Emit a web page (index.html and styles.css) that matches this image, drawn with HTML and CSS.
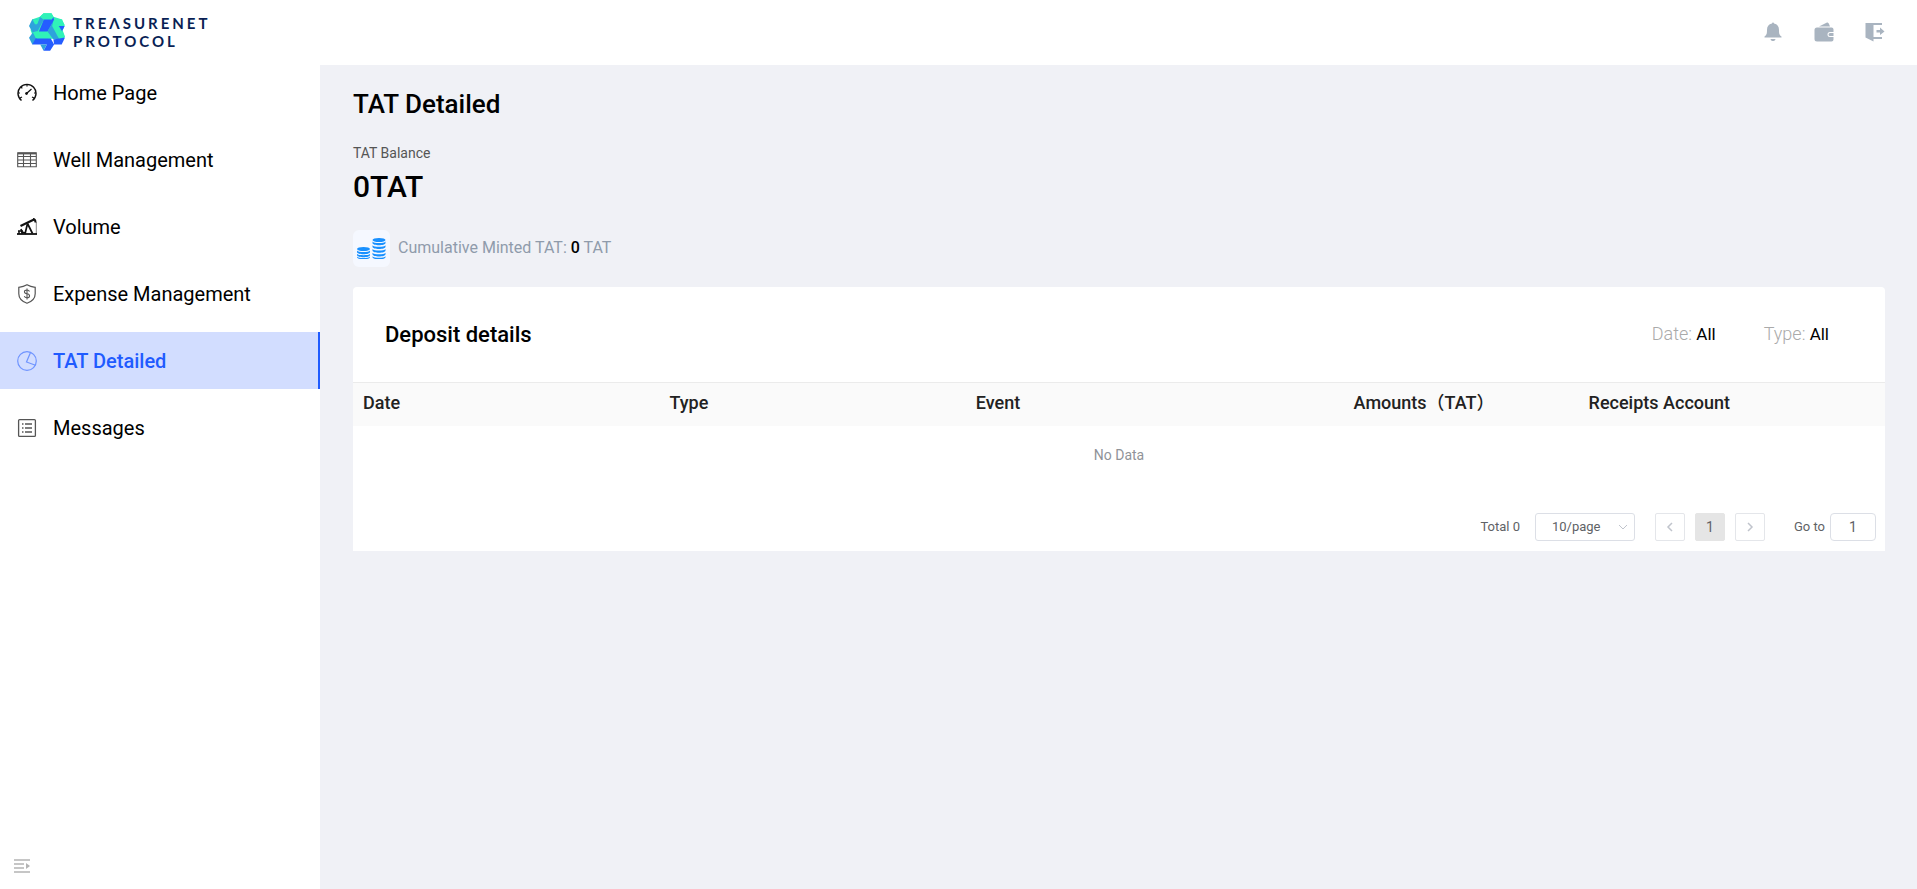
FILE: index.html
```html
<!DOCTYPE html>
<html lang="en">
  <head>
    <meta charset="utf-8" />
    <meta name="viewport" content="width=device-width, initial-scale=1" />
    <link rel="stylesheet" href="styles.css">
    <title>TAT Detailed</title>
  </head>
  <body>
    <header class="topbar">
      <a class="brand" href="#">
        <svg class="brand-mark" viewBox="0 0 109 113">
          <path fill="#30f2b8" d="M33 10L44 0h24l6 10 24 8 10 18-6 15 7 20-36 6-58 2-10-28 6-33z" />
          <path fill="#2ea3dc" d="M10 18L0 38l11 20 13-5 12-22-8-13z" />
          <path fill="#30f2b8" d="M10 18h23l-8 15H18z" />
          <path fill="#2ea3dc" d="M33 10l12 9-19 35H12l14-22z" />
          <path fill="#30f2b8" d="M33 10L44 0h24l6 10-5 9H45z" />
          <path fill="#255dff" d="M45 19h24l5-8 2 10-20 34H30z" />
          <path fill="#2ea3dc" d="M71 28l-15 27 18 24h26L72 30z" />
          <path fill="#30f2b8" d="M76 18h24l8 18-18 2 19 34-9 7h-8L70 38z" />
          <path fill="#255dff" d="M90 38h18l-8 16z" />
          <path fill="#2ea3dc" d="M12 57L0 74l10 20 12-8 2-9z" />
          <path fill="#30f2b8" d="M12 57h44l10 18H20z" />
          <path fill="#255dff" d="M20 76h46l10 18-12 19H44l10-19H10z" />
          <path fill="#255dff" d="M74 79l35-6-10 21H76z" />
          <path fill="#2ea3dc" d="M34 94h20l-10 19z" />
        </svg>
        <span class="brand-name">TREΛSURENET<br>PROTOCOL</span>
      </a>
      <div class="actions">
        <button class="icon-button" aria-label="Notifications">
          <svg viewBox="0 0 20 20">
            <path d="M9 1.500a1 1 0 0 1 2 0c3.500.7 5 3 5 6.500 0 4 .5 5 2.500 6.500v1h-17v-1C3.500 13 4 12 4 8c0-3.500 1.500-5.800 5-6.500zM7.500 17h5c-.4 1.500-1 2-2.500 2s-2.100-.5-2.500-2z" />
          </svg>
        </button>
        <button class="icon-button" aria-label="Wallet">
          <svg viewBox="0 0 20 20">
            <path d="M5 4.500L13 .5c1 0 1.500.5 2 1.500l1 2.500zM3 5.500h14.500a2 2 0 0 1 2 2V10h-3.500a2.500 2.500 0 0 0 0 5h3.500v2.500a2 2 0 0 1-2 2H3a2.500 2.500 0 0 1-2.500-2.500V8A2.500 2.500 0 0 1 3 5.500z" />
            <path d="M16 11h3.500v3H16a1.500 1.500 0 0 1 0-3z" />
          </svg>
        </button>
        <button class="icon-button" aria-label="Log out">
          <svg viewBox="0 0 20 20">
            <path d="M.5 1H17v2H8.500v12H17v2H8.500v2.500L.5 15.500z" />
            <path d="M11.500 8H15V5.500L19.500 9.500 15 13v-2.500h-3.500z" />
          </svg>
        </button>
      </div>
    </header>

    <div class="layout">
      <aside class="sidebar">
        <nav class="menu">
          <a class="menu-item" href="#">
            <svg class="menu-icon dark" viewBox="0 0 20 20">
              <path d="M4.500 17.500a9 9 0 1 1 11 0" stroke-width="1.400" />
              <path d="M10 1.500v2M4 4l1.300 1.300M1 10h2M17 10h2M3 15l2-1M17 15l-2-1M9.500 10.500l5-4.500" stroke-width="1.200" />
              <circle cx="9.500" cy="10.500" r="1" fill="currentColor" />
            </svg>
            Home Page
          </a>
          <a class="menu-item" href="#">
            <svg class="menu-icon" viewBox="0 0 20 20">
              <path d="M.7 2.800h18.600v14H.7zM.7 6.500h18.600M.7 10h18.600M.7 13.500h18.600M6.500 4v13M13.500 4v13" stroke-width="1.100" />
              <path d="M1 3.500h18" stroke-width="1.800" />
            </svg>
            Well Management
          </a>
          <a class="menu-item" href="#">
            <svg class="menu-icon dark" viewBox="0 0 20 20">
              <path d="M0 17h20" stroke-width="1.800" />
              <path d="M1 14h5M2 17v-2.500M5 17v-2" stroke-width="1.500" />
              <path d="M3.500 9L17 2.500" stroke-width="2.200" />
              <path d="M16 2c2 0 2.500 1.500 2.500 3.500" stroke-width="2" />
              <path d="M10.500 6.500L8 17M10.500 6.500l5 10M4 12l1 3 3 1" stroke-width="1.700" />
              <path d="M19.300 5v12" stroke-width=".5" />
            </svg>
            Volume
          </a>
          <a class="menu-item" href="#">
            <svg class="menu-icon" viewBox="0 0 20 20">
              <path d="M10 .8c2.500 1.500 5 2.200 8.200 2.500v6.500c0 5-4 8-8.200 9.500-4.200-1.500-8.200-4.500-8.200-9.500V3.300C5 3 7.500 2.300 10 .8z" stroke-width="1.200" />
              <path d="M12.500 7.500C12 6.300 11 6 10 6c-3.500 0-3.300 3.300 0 3.800 3.500.6 3.300 4 0 4-1.300 0-2.300-.5-2.700-1.700M10 4.500v11" stroke-width="1.100" />
            </svg>
            Expense Management
          </a>
          <a class="menu-item active" href="#">
            <svg class="menu-icon" viewBox="0 0 20 20">
              <circle cx="10" cy="10" r="9.300" stroke-width="1.200" />
              <path d="M13.500 1.500L9.500 11l9 3.300" stroke-width="1.200" />
            </svg>
            TAT Detailed
          </a>
          <a class="menu-item" href="#">
            <svg class="menu-icon" viewBox="0 0 20 20">
              <rect x="1.600" y="1.600" width="16.800" height="16.800" rx="1" stroke-width="1.300" />
              <path d="M8 6h7M8 10h7M8 14h7M5 6h1.500M5 10h1.500M5 14h1.500" stroke-width="1.300" />
            </svg>
            Messages
          </a>
        </nav>
        <button class="collapse" aria-label="Expand menu">
          <svg viewBox="0 0 16 16">
            <path d="M0 2h16M0 6h10M0 10h10M0 14h16" stroke="currentColor" stroke-width="1.500" />
            <path d="M12 5l4 3-4 3z" fill="currentColor" />
          </svg>
        </button>
      </aside>

      <main class="content">
        <h1 class="page-title">TAT Detailed</h1>
        <p class="balance-label">TAT Balance</p>
        <p class="balance">0TAT</p>
        <div class="minted">
          <span class="coins">
            <svg viewBox="0 0 29 21">
              <g fill="#1890ff">
                <ellipse cx="6.500" cy="11" rx="6.500" ry="2" />
                <path d="M0 12.500v1.500c0 3 13 3 13 0v-1.500c-1 2-12 2-13 0zM0 15.700v1.300c0 3 13 3 13 0v-1.300c-1 2-12 2-13 0zM0 18.500v.7c0 2.800 13 2.800 13 0v-.7c-1 2-12 2-13 0z" />
                <ellipse cx="22" cy="2" rx="6.500" ry="2" />
                <path d="M15.500 3.500V5c0 3 13 3 13 0V3.500c-1 2-12 2-13 0zM15.500 7.200v1.500c0 3 13 3 13 0V7.200c-1 2-12 2-13 0zM15.500 11v1.500c0 3 13 3 13 0V11c-1 2-12 2-13 0zM15.500 14.700v1.500c0 3 13 3 13 0v-1.500c-1 2-12 2-13 0zM15.500 18.200v1c0 2.800 13 2.800 13 0v-1c-1 2-12 2-13 0z" />
              </g>
            </svg>
          </span>
          <p>Cumulative Minted TAT: <strong>0</strong> TAT</p>
        </div>

        <section class="card">
          <div class="card-header">
            <h2>Deposit details</h2>
            <div class="filters">
              <button class="filter"><span>Date:</span> All</button>
              <button class="filter"><span>Type:</span> All</button>
            </div>
          </div>
          <table class="table">
            <thead>
              <tr>
                <th class="col-date">Date</th>
                <th class="col-type">Type</th>
                <th class="col-event">Event</th>
                <th class="col-amount">Amounts（TAT）</th>
                <th class="col-account">Receipts Account</th>
              </tr>
            </thead>
            <tbody>
              <tr>
                <td class="empty" colspan="5">No Data</td>
              </tr>
            </tbody>
          </table>
          <div class="pagination">
            <span class="total">Total 0</span>
            <div class="sizes">
              <select aria-label="Page size">
                <option>10/page</option>
                <option>20/page</option>
                <option>50/page</option>
              </select>
              <svg viewBox="0 0 10 10"><path d="M1 3l4 4 4-4" /></svg>
            </div>
            <div class="pager">
              <button class="page-button" aria-label="Previous page" disabled>
                <svg viewBox="0 0 10 10"><path d="M7 1L3 5l4 4" /></svg>
              </button>
              <button class="page-button current">1</button>
              <button class="page-button" aria-label="Next page" disabled>
                <svg viewBox="0 0 10 10"><path d="M3 1l4 4-4 4" /></svg>
              </button>
            </div>
            <label class="jump">Go to <input type="text" value="1" /></label>
          </div>
        </section>
      </main>
    </div>
  </body>
</html>
```
FILE: styles.css
```css
* {
  box-sizing: border-box;
}
body {
  margin: 0;
  min-height: 100vh;
  display: flex;
  flex-direction: column;
  font-family: Roboto, "Noto Sans CJK SC", sans-serif;
  color: #000;
  background-color: white;
}
h1,
h2,
p {
  margin: 0;
}
a {
  color: inherit;
  text-decoration: none;
}
button,
input,
select {
  font-family: inherit;
  color: inherit;
}
button {
  padding: 0;
  border: none;
  background: none;
  cursor: pointer;
}
svg {
  display: block;
}

.topbar {
  display: flex;
  align-items: center;
  justify-content: space-between;
  height: 65px;
  padding: 0 32px 2px 29px;
}
.brand {
  display: flex;
  align-items: center;
  gap: 8px;
}
.brand-mark {
  width: 36px;
  height: 38px;
}
.brand-name {
  font-family: Lato, sans-serif;
  font-size: 15px;
  font-weight: 700;
  line-height: 18px;
  letter-spacing: 3px;
  color: #0a1f55;
}
.actions {
  display: flex;
  gap: 31px;
}
.icon-button svg {
  width: 20px;
  height: 20px;
  fill: #a9b4c0;
}

.layout {
  display: flex;
  flex: 1;
}
.sidebar {
  display: flex;
  flex-direction: column;
  justify-content: space-between;
  width: 320px;
  flex-shrink: 0;
}
.menu {
  display: flex;
  flex-direction: column;
  gap: 10px;
  margin-top: -1px;
}
.menu-item {
  display: flex;
  align-items: center;
  gap: 16px;
  height: 57px;
  padding-left: 17px;
  font-size: 20px;
}
.menu-icon {
  width: 20px;
  height: 20px;
  fill: none;
  stroke: currentColor;
  color: #555;
}
.menu-icon.dark {
  color: #111;
}
.menu-item.active {
  color: #1f5bff;
  font-weight: 500;
  background-color: #d2ddff;
  border-right: 2px solid #1f5bff;
}
.active .menu-icon {
  color: #6f94ff;
}
.collapse {
  align-self: flex-start;
  margin: 0 0 15px 14px;
  color: #b4b4b4;
}
.collapse svg {
  width: 16px;
  height: 16px;
}

.content {
  flex: 1;
  padding: 20px 32px 32px 33px;
  background-color: #f0f1f6;
}
.page-title {
  font-size: 26px;
  font-weight: 500;
  line-height: 38px;
}
.balance-label {
  margin-top: 20px;
  font-size: 14px;
  line-height: 20px;
  color: #555;
}
.balance {
  margin-top: 4px;
  font-size: 30px;
  font-weight: 500;
  line-height: 40px;
}
.minted {
  display: flex;
  align-items: center;
  gap: 8px;
  margin-top: 23px;
  font-size: 16px;
  color: #8f9bab;
}
.minted p {
  padding-bottom: 2px;
}
.minted strong {
  font-weight: 500;
  color: #000;
}
.coins {
  padding: 8px 4px;
  border-radius: 6px;
  background-color: #f5f8ff;
}
.coins svg {
  width: 29px;
  height: 21px;
}

.card {
  margin-top: 20px;
  border-radius: 4px 4px 0 0;
  background-color: white;
}
.card-header {
  display: flex;
  align-items: center;
  justify-content: space-between;
  height: 95px;
  padding: 0 56px 0 32px;
}
.card-header h2 {
  font-size: 22px;
  font-weight: 500;
}
.filters {
  display: flex;
  gap: 48px;
  padding-bottom: 2px;
}
.filter {
  font-size: 17px;
}
.filter span {
  font-size: 18px;
  font-weight: 300;
  color: #aaa;
}

.table {
  width: 100%;
  table-layout: fixed;
  border-collapse: collapse;
}
.table th {
  height: 43px;
  padding: 0 10px;
  border-top: 1px solid #ebebeb;
  font-size: 18px;
  font-weight: 500;
  line-height: 40px;
  text-align: left;
  vertical-align: baseline;
  white-space: nowrap;
  color: #222;
  background-color: #fafafa;
}
.col-date,
.col-type,
.col-account {
  width: 20%;
}
.col-amount {
  width: 235px;
}
.table .empty {
  height: 58px;
  font-size: 14px;
  text-align: center;
  color: #909399;
}

.pagination {
  display: flex;
  align-items: center;
  justify-content: flex-end;
  padding: 29px 9px 10px;
  font-size: 13px;
  color: #606266;
}
.total {
  margin-right: 15px;
}
.sizes {
  position: relative;
  margin-right: 20px;
}
.sizes select {
  width: 100px;
  height: 28px;
  padding: 0 16px;
  border: 1px solid #dcdfe6;
  border-radius: 3px;
  font-size: 13px;
  background-color: white;
  appearance: none;
}
.sizes svg {
  position: absolute;
  top: 9px;
  right: 7px;
  width: 10px;
  height: 10px;
  fill: none;
  stroke: #c0c4cc;
  pointer-events: none;
}
.pager {
  display: flex;
  gap: 10px;
}
.page-button {
  display: flex;
  align-items: center;
  justify-content: center;
  width: 30px;
  height: 28px;
  border: 1px solid #e4e6ea;
  border-radius: 2px;
  font-size: 14px;
}
.page-button svg {
  width: 10px;
  height: 10px;
  fill: none;
  stroke: #c0c4cc;
  stroke-width: 1.5;
}
.page-button.current {
  border-color: #e5e5e5;
  background-color: #e5e5e5;
}
.jump {
  display: flex;
  align-items: center;
  gap: 5px;
  margin-left: 29px;
}
.jump input {
  width: 46px;
  height: 28px;
  border: 1px solid #dcdfe6;
  border-radius: 4px;
  font-size: 14px;
  text-align: center;
}
```
